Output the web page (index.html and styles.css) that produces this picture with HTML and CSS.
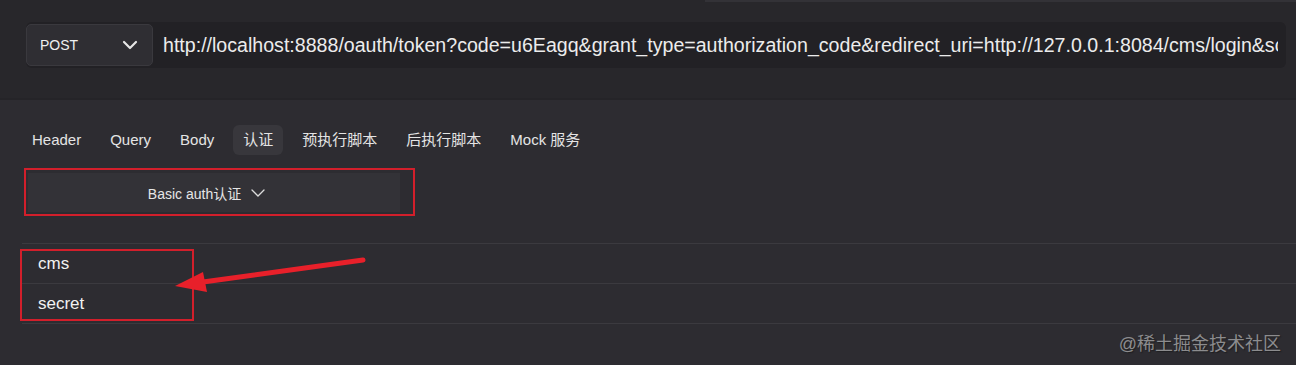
FILE: index.html
```html
<!DOCTYPE html>
<html lang="en">
<head>
	<meta charset="UTF-8">
	<title>Document</title>
	<link rel="stylesheet" href="styles.css">
</head>
<body>
	<div class="top">
		<div class="topline"></div>
		<div class="urlbar">
			<div class="method">
				<span>POST</span>
				<svg class="chev" width="16" height="10" viewBox="0 0 16 10"><path d="M2 2 L8 8 L14 2" fill="none" stroke="#e6e6e6" stroke-width="2.2" stroke-linecap="round" stroke-linejoin="round"/></svg>
			</div>
			<div class="url">http://localhost:8888/oauth/token?code=u6Eagq&amp;grant_type=authorization_code&amp;redirect_uri=http://127.0.0.1:8084/cms/login&amp;scope=all</div>
		</div>
	</div>

	<div class="main">
		<div class="tabs">
			<span class="tab">Header</span>
			<span class="tab">Query</span>
			<span class="tab">Body</span>
			<span class="tab active">认证</span>
			<span class="tab">预执行脚本</span>
			<span class="tab">后执行脚本</span>
			<span class="tab">Mock 服务</span>
		</div>

		<div class="mark">
			<div class="select">
				<span>Basic auth认证</span>
				<svg width="16" height="10" viewBox="0 0 16 10"><path d="M2 2 L8 8 L14 2" fill="none" stroke="#dcdcdc" stroke-width="1.3" stroke-linecap="round"/></svg>
			</div>
		</div>

		<div class="rows">
			<div class="row">cms</div>
			<div class="row">secret</div>
			<div class="box"></div>
			<svg class="arrow" width="200" height="40" viewBox="0 0 200 40">
				<path d="M190 6 L30 28" stroke="#e8202a" stroke-width="5" stroke-linecap="round"/>
				<path d="M2 32 L30 18 L34 38 Z" fill="#e8202a"/>
			</svg>
		</div>
	</div>

	<div class="water">@稀土掘金技术社区</div>
</body>
</html>
```

FILE: styles.css
```css
body{
	margin: 0;
	background: #2d2c31;
	font-family: "Liberation Sans", "Noto Sans CJK SC", sans-serif;
	color: #e8e8e8;
	height: 365px;
	overflow: hidden;
	position: relative;
}
.top{
	height: 100px;
	background: #28272b;
	padding: 22px 10px 0 26px;
	box-sizing: border-box;
	border-bottom: 2px solid #252428;
	position: relative;
}
.topline{
	position: absolute;
	top: 0;
	left: 705px;
	right: 0;
	height: 2px;
	background: #333237;
}
.urlbar{
	display: flex;
	align-items: center;
	height: 46px;
	background: #222125;
	border-radius: 6px;
}
.method{
	display: flex;
	align-items: center;
	justify-content: space-between;
	width: 127px;
	height: 42px;
	box-sizing: border-box;
	padding: 0 14px 0 13px;
	background: #2f2e33;
	border: 1px solid #3a393e;
	border-radius: 5px;
	font-size: 14px;
	color: #f0f0f0;
}
.url{
	flex: 1;
	margin-left: 10px;
	font-size: 19.6px;
	white-space: nowrap;
	overflow: hidden;
	color: #ececec;
	margin-right: 8px;
}
.main{
	padding: 25px 0 0 0;
}
.tabs{
	display: flex;
	gap: 9px;
	padding-left: 22px;
	height: 30px;
	align-items: center;
}
.tab{
	font-size: 15px;
	padding: 0 10px;
	line-height: 30px;
	color: #e4e4e4;
	border-radius: 6px;
}
.tab.active{
	background: #38373c;
}
.mark{
	margin: 13px 0 0 24px;
	width: 391px;
	height: 48px;
	box-sizing: border-box;
	border: 2px solid #d21f2b;
	padding: 3px 13px 2px 2px;
}
.select{
	height: 100%;
	background: #333237;
	display: flex;
	align-items: center;
	justify-content: center;
	gap: 9px;
	font-size: 14px;
	color: #e6e6e6;
	padding-right: 14px;
}
.rows{
	position: relative;
	margin: 27px 0 0 22px;
	border-top: 1px solid #3b3a3f;
}
.row{
	height: 39px;
	line-height: 39px;
	border-bottom: 1px solid #3b3a3f;
	padding-left: 16px;
	font-size: 17px;
	color: #f2f2f2;
}
.box{
	position: absolute;
	left: -2px;
	top: 5px;
	width: 174px;
	height: 72px;
	box-sizing: border-box;
	border: 2px solid #d21f2b;
}
.arrow{
	position: absolute;
	left: 151px;
	top: 10px;
}
.water{
	position: absolute;
	right: 15px;
	top: 329px;
	font-size: 18px;
	color: #8c8c8e;
	text-shadow: 1px 1px 1px #1e1e20;
}
```
